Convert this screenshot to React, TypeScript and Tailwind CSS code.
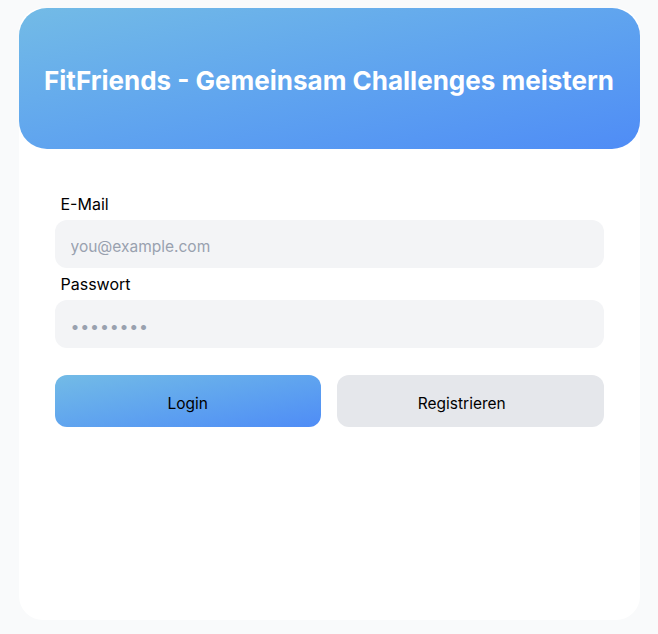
export default function App() {
  return (
    <div
      className="min-h-[634px] bg-gray-50 pt-2 pb-[14px]"
      style={{ fontFamily: "Inter, 'Noto Sans', sans-serif" }}
    >
      <div className="mx-auto flex h-[612px] w-[621px] flex-col rounded-3xl bg-white">
        <header className="flex h-[141px] items-center justify-center rounded-[28px] bg-gradient-to-br from-[#73bbe6] to-[#4f8cf6] pt-[5px]">
          <h1 className="text-[26px] font-bold leading-8 text-white">
            FitFriends - Gemeinsam Challenges meistern
          </h1>
        </header>

        <form className="flex flex-col px-9 pt-[43px]">
          <label className="px-1.5 text-base leading-6 text-black">E-Mail</label>
          <input
            type="email"
            placeholder="you@example.com"
            className="mt-1 h-12 rounded-xl bg-gray-100 px-4 pt-1 text-[15.5px] text-gray-900 placeholder:text-gray-400 outline-none"
          />
          <label className="mt-1 px-1.5 text-base leading-6 text-black">
            Passwort
          </label>
          <input
            type="password"
            defaultValue="password"
            className="mt-1 h-12 rounded-xl bg-gray-100 px-4 pt-1 text-base tracking-wider text-gray-400 outline-none"
          />

          <div className="mt-[27px] grid grid-cols-2 gap-4">
            <button
              type="button"
              className="h-[52px] rounded-xl bg-gradient-to-br from-[#73bbe6] to-[#4f8cf6] pt-1.5 text-[15.5px] text-black"
            >
              Login
            </button>
            <button
              type="button"
              className="h-[52px] rounded-xl bg-gray-200 pt-1.5 pr-[17px] text-[15.5px] text-black"
            >
              Registrieren
            </button>
          </div>
        </form>
      </div>
    </div>
  );
}
